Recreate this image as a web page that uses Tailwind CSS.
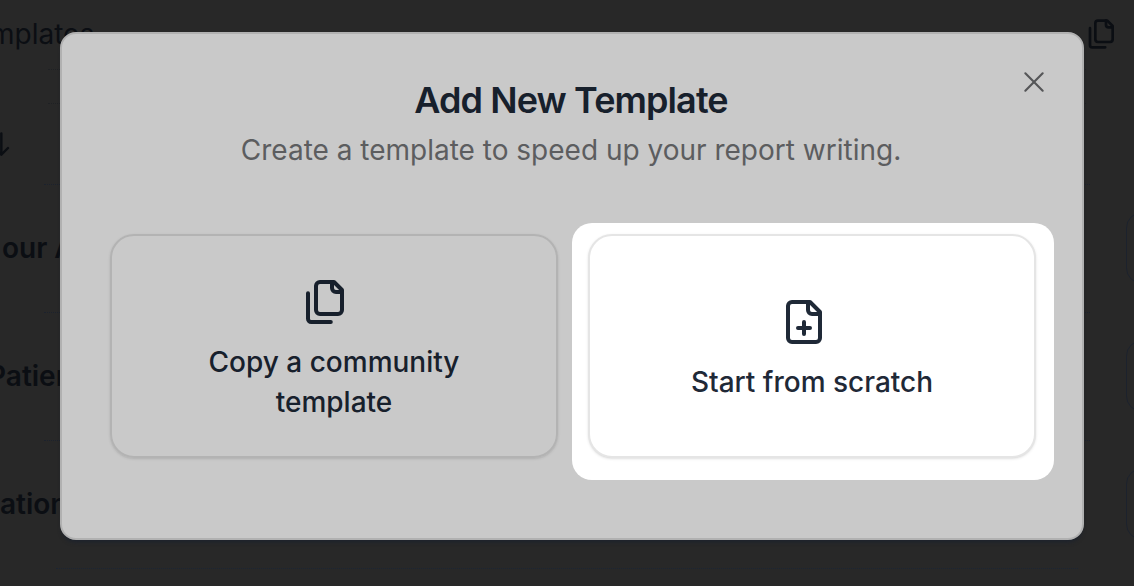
<!DOCTYPE html>
<html lang="en">
<head>
<meta charset="utf-8">
<meta name="viewport" content="width=device-width, initial-scale=1">
<title>Add New Template</title>
<script src="https://cdn.jsdelivr.net/npm/@tailwindcss/browser@4"></script>
</head>
<body class="relative min-h-screen overflow-hidden bg-[#282828] font-['Inter',sans-serif] text-[28px] leading-10 text-[#0b0e13]">

<!-- Dimmed page behind the dialog -->
<div class="absolute inset-0 overflow-hidden" aria-hidden="true">
  <div class="flex h-[69px] items-center justify-between pr-4 pb-0.5">
    <span class="-ml-2.5">mplates</span>
    <svg class="size-8" viewBox="0 0 24 24" fill="none" stroke="currentColor" stroke-width="2" stroke-linecap="round" stroke-linejoin="round"><path d="M20 7h-3a2 2 0 0 1-2-2V2"/><path d="M9 18a2 2 0 0 1-2-2V4a2 2 0 0 1 2-2h7l4 4v10a2 2 0 0 1-2 2Z"/><path d="M3 7.6v12.8A1.6 1.6 0 0 0 4.6 22h9.8"/></svg>
  </div>
  <div class="mx-12 h-[34px] border-t border-dotted border-[#1f2124]"></div>
  <div class="h-[81px]">
    <div class="mx-12 border-t border-dotted border-[#1f2124]"></div>
    <svg class="-ml-4 mt-6 size-8" viewBox="0 0 24 24" fill="none" stroke="currentColor" stroke-width="1.8" stroke-linecap="round" stroke-linejoin="round"><path d="M13 4v16M8 15l5 5 5-5"/></svg>
  </div>
  <div class="h-32">
    <div class="mx-11 border-t border-dotted border-[#1c222d]"></div>
    <div class="flex h-[127px] items-center justify-between pb-0.5 font-semibold"><span class="ml-0.5">our A</span><span class="-mr-16 h-[72px] w-[72px] rounded-2xl border border-[#1c222d]"></span></div>
  </div>
  <div class="h-32">
    <div class="mx-11 border-t border-dotted border-[#1c222d]"></div>
    <div class="flex h-[127px] items-center justify-between pb-0.5 font-semibold"><span class="-ml-3">Patient</span><span class="-mr-16 h-[72px] w-[72px] rounded-2xl border border-[#1c222d]"></span></div>
  </div>
  <div class="h-32">
    <div class="mx-11 border-t border-dotted border-[#1c222d]"></div>
    <div class="flex h-[127px] items-center justify-between pb-0.5 font-semibold"><span>ation</span><span class="-mr-16 h-[72px] w-[72px] rounded-2xl border border-[#1c222d]"></span></div>
  </div>
  <div class="mx-14 border-t border-dotted border-[#1c2533]"></div>
</div>

<div class="relative pt-8 pr-[50px] pb-[46px] pl-[60px]">
  <div role="dialog" aria-labelledby="title" aria-describedby="desc" class="relative rounded-2xl border-2 border-[#b1b1b1] bg-[#c9c9c9] pt-[42px] pr-[46px] pb-20 pl-[48px] shadow-[0_4px_4px_-2px_#1c222d]">
    <header class="-ml-1 text-center">
      <h2 id="title" class="text-4xl leading-12 font-semibold tracking-tight text-[#17202c]">Add New Template</h2>
      <p id="desc" class="mt-1.5 leading-10 text-[#5c5d5f]">Create a template to speed up your report writing.</p>
    </header>
    <button type="button" aria-label="Close" class="absolute top-8 right-8 text-[#555658]">
      <svg class="size-8" viewBox="0 0 24 24" fill="none" stroke="currentColor" stroke-width="1.6" stroke-linecap="round"><path d="M5.500 5.500l13 13M18.500 5.500l-13 13"/></svg>
    </button>
    <div class="mt-16 grid grid-cols-2 gap-[30px] font-medium">
      <button type="button" class="flex h-56 flex-col items-center justify-center rounded-3xl border-2 border-[#b3b3b3] px-16 pt-2 text-[#17202c] shadow-sm">
        <svg class="mr-4 mb-4 size-12 shrink-0" viewBox="0 0 24 24" fill="none" stroke="currentColor" stroke-width="2" stroke-linecap="round" stroke-linejoin="round"><path d="M20 7h-3a2 2 0 0 1-2-2V2"/><path d="M9 18a2 2 0 0 1-2-2V4a2 2 0 0 1 2-2h7l4 4v10a2 2 0 0 1-2 2Z"/><path d="M3 7.6v12.8A1.600 1.600 0 0 0 4.600 22h9.800"/></svg>
        <span>Copy a community template</span>
      </button>
      <div class="relative isolate">
        <div class="absolute -top-[11px] -right-[18px] -bottom-[22px] -left-4 -z-10 rounded-[20px] bg-white"></div>
        <button type="button" class="flex h-56 w-full flex-col items-center justify-center rounded-3xl border-2 border-[#e5e5e5] bg-white px-16 pt-2 text-[#1f2937] shadow-sm">
          <svg class="mr-4 mb-4 size-12 shrink-0" viewBox="0 0 24 24" fill="none" stroke="currentColor" stroke-width="2" stroke-linecap="round" stroke-linejoin="round"><path d="M15 2H6a2 2 0 0 0-2 2v16a2 2 0 0 0 2 2h12a2 2 0 0 0 2-2V7Z"/><path d="M14 2v4a2 2 0 0 0 2 2h4"/><path d="M9 15h6M12 18v-6"/></svg>
          <span>Start from scratch</span>
        </button>
      </div>
    </div>
  </div>
</div>
</body>
</html>
